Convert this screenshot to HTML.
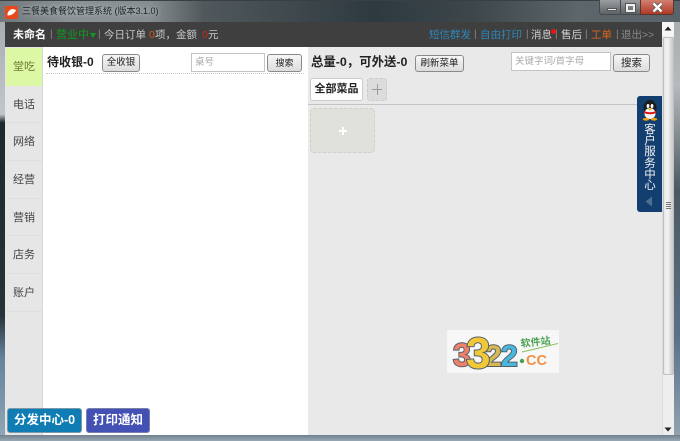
<!DOCTYPE html>
<html lang="zh">
<head>
<meta charset="utf-8">
<style>
html,body{margin:0;padding:0}
body{width:680px;height:441px;overflow:hidden;position:relative;background:#5d6870;font-family:"Liberation Sans","Noto Sans CJK SC",sans-serif;font-size:12px;color:#333}
.a{position:absolute}
.t{position:absolute;white-space:nowrap;line-height:16px}
.h{font-size:10.5px;top:27px}
.s{font-size:10px;top:27px;color:#888}
.nav{position:absolute;left:6px;width:36px;background:#e6e6e6;border-bottom:1px solid #dedede;text-align:center;font-size:11px;color:#444;box-sizing:border-box}
.btn{position:absolute;box-sizing:border-box;height:18px;border:1px solid #8a8a8a;border-radius:3px;background:linear-gradient(#f6f6f6,#dcdcdc);text-align:center;font-size:9.5px;line-height:16px;color:#222;white-space:nowrap}
.inp{position:absolute;box-sizing:border-box;background:#fff;border:1px solid #c4c4c4;color:#aaa;font-size:9.5px;white-space:nowrap}
</style>
</head>
<body>
<!-- frame -->
<div class="a" style="left:0;top:0;width:680px;height:22px;background:linear-gradient(90deg,#70787c 0,#8a9296 10%,#868e92 22%,#50585c 30%,#2e3a40 55%,#3d474c 70%,#5d666a 85%,#59636a 100%)"></div>
<div class="a" style="left:0;top:0;width:680px;height:1px;background:#3a3f42"></div>
<div class="a" style="left:0;top:22px;width:5px;height:419px;background:linear-gradient(#a9aeb0 0,#c2c6c8 22%,#1c2a30 24%,#26343a 70%,#64829a 80%,#94a8b8 100%)"></div>
<div class="a" style="left:674px;top:22px;width:6px;height:419px;background:linear-gradient(#a9aeb0 0,#b5babd 15%,#4a5a62 40%,#5b7186 75%,#92a5b4 100%)"></div>
<div class="a" style="left:0;top:435px;width:680px;height:6px;background:linear-gradient(#70808c,#98a8b4)"></div>

<!-- title bar -->
<svg class="a" style="left:5px;top:6px" width="13" height="13" viewBox="0 0 13 13"><rect width="13" height="13" rx="2" fill="#e8481c"/><path d="M2.5 9.5 C2 6 5 3 8 3 L11 4 C10 7 7 9.5 2.5 9.5Z" fill="#fff"/></svg>
<div class="t" style="left:22px;top:3px;font-size:9px;color:#1c2022;text-shadow:0 0 4px #d0d4d6">三餐美食餐饮管理系统 (版本3.1.0)</div>
<!-- window buttons -->
<div class="a" style="left:599px;top:0;width:22px;height:15px;box-sizing:border-box;background:linear-gradient(#9a9ea0,#5c6265);border:1px solid #45494b;border-top:0;border-radius:0 0 0 3px"></div>
<div class="a" style="left:607px;top:8px;width:10px;height:3px;background:#f0f0f0;border:1px solid #555;box-sizing:border-box"></div>
<div class="a" style="left:621px;top:0;width:19px;height:15px;box-sizing:border-box;background:linear-gradient(#9a9ea0,#5c6265);border-bottom:1px solid #45494b"></div>
<div class="a" style="left:626px;top:4px;width:9px;height:8px;box-sizing:border-box;border:2px solid #eee;outline:1px solid #555"></div>
<div class="a" style="left:640px;top:0;width:34px;height:15px;box-sizing:border-box;background:linear-gradient(#d08070,#b03a26);border:1px solid #5a3530;border-top:0;border-radius:0 0 3px 0"></div>
<svg class="a" style="left:651px;top:2px" width="13" height="11" viewBox="0 0 13 11"><path d="M2.5 1.5 L10.5 9.5 M10.5 1.5 L2.5 9.5" stroke="#555" stroke-width="4"/><path d="M2.5 1.5 L10.5 9.5 M10.5 1.5 L2.5 9.5" stroke="#fff" stroke-width="2.4"/></svg>

<!-- header -->
<div class="a" style="left:5px;top:22px;width:657px;height:25px;background:#3f3f3f"></div>
<div class="t" style="left:13px;top:27px;font-size:11px;font-weight:bold;color:#fff">未命名</div>
<div class="t s" style="left:50px">|</div>
<div class="t" style="left:56px;top:27px;font-size:11px;color:#0f9a1c">营业中</div>
<svg class="a" style="left:90px;top:33px" width="6" height="5" viewBox="0 0 6 5"><path d="M0 0 L6 0 L3 5Z" fill="#0f9a1c"/></svg>
<div class="t s" style="left:98px">|</div>
<div class="t h" style="left:104px;color:#c8c8c8">今日订单</div>
<div class="t h" style="left:149px;color:#d9541e">0</div>
<div class="t h" style="left:155px;color:#c8c8c8">项，金额</div>
<div class="t h" style="left:202px;color:#c82a1e">0</div>
<div class="t h" style="left:208px;color:#c8c8c8">元</div>

<div class="t h" style="left:429px;color:#2f86b8">短信群发</div>
<div class="t s" style="left:474px">|</div>
<div class="t h" style="left:480px;color:#2f86b8">自由打印</div>
<div class="t s" style="left:526px">|</div>
<div class="t h" style="left:531px;color:#d0d0d0">消息</div>
<div class="a" style="left:551px;top:29px;width:5px;height:5px;border-radius:50%;background:#f01010"></div>
<div class="t s" style="left:555px">|</div>
<div class="t h" style="left:561px;color:#d0d0d0">售后</div>
<div class="t s" style="left:585px">|</div>
<div class="t h" style="left:591px;color:#e0641a">工单</div>
<div class="t s" style="left:616px">|</div>
<div class="t h" style="left:621px;color:#8a8a8a">退出&gt;&gt;</div>

<!-- sidebar -->
<div class="a" style="left:5px;top:47px;width:38px;height:388px;background:#e6e6e6;border-right:1px solid #d8d8d8;box-sizing:border-box"></div>
<div class="nav" style="top:48px;height:38px;line-height:39px;background:#dcf8a4;color:#6c7a30;border:0">堂吃</div>
<div class="nav" style="top:86px;height:37px;line-height:38px">电话</div>
<div class="nav" style="top:123px;height:38px;line-height:39px">网络</div>
<div class="nav" style="top:161px;height:38px;line-height:39px">经营</div>
<div class="nav" style="top:199px;height:37px;line-height:38px">营销</div>
<div class="nav" style="top:236px;height:38px;line-height:39px">店务</div>
<div class="nav" style="top:274px;height:38px;line-height:39px">账户</div>

<!-- order column -->
<div class="a" style="left:43px;top:47px;width:265px;height:388px;background:#fff"></div>
<div class="t" style="left:47px;top:54px;font-size:12px;font-weight:bold;color:#222">待收银-0</div>
<div class="btn" style="left:102px;top:54px;width:38px">全收银</div>
<div class="inp" style="left:191px;top:53px;width:74px;height:19px;padding:2px 3px;line-height:13px">桌号</div>
<div class="btn" style="left:267px;top:54px;width:35px;font-size:9px">搜索</div>
<div class="a" style="left:46px;top:73px;width:258px;height:1px;border-top:1px dotted #c4c4c4"></div>

<!-- menu column -->
<div class="a" style="left:308px;top:47px;width:354px;height:388px;background:#e9e9e9"></div>
<div class="t" style="left:311px;top:54px;font-size:12.4px;font-weight:bold;color:#222">总量-0，可外送-0</div>
<div class="btn" style="left:415px;top:55px;width:49px;height:17px;line-height:15px">刷新菜单</div>
<div class="inp" style="left:511px;top:52px;width:100px;height:19px;padding:2px 3px;line-height:13px">关键字词/首字母</div>
<div class="btn" style="left:613px;top:54px;width:37px;height:18px;font-size:10.5px">搜索</div>
<div class="a" style="left:310px;top:78px;width:53px;height:23px;box-sizing:border-box;background:#fff;border:1px solid #ccc;border-radius:3px;text-align:center;font-size:11px;font-weight:bold;line-height:21px;color:#222;white-space:nowrap">全部菜品</div>
<div class="a" style="left:367px;top:78px;width:20px;height:23px;box-sizing:border-box;background:#dcdcdc;border:1px dashed #ccc;border-radius:3px"></div>
<div class="a" style="left:372px;top:89px;width:10px;height:1px;background:#9a9a9a"></div>
<div class="a" style="left:377px;top:84px;width:1px;height:11px;background:#9a9a9a"></div>
<div class="a" style="left:308px;top:104px;width:354px;height:1px;background:#c4c4c4"></div>
<div class="a" style="left:310px;top:108px;width:65px;height:45px;box-sizing:border-box;background:#dfe1da;border:1px dashed #cfd1ca;border-radius:4px"></div>
<div class="a" style="left:339px;top:130px;width:8px;height:2px;background:#fff"></div>
<div class="a" style="left:342px;top:127px;width:2px;height:8px;background:#fff"></div>

<!-- bottom buttons -->
<div class="a" style="left:7px;top:408px;width:75px;height:25px;box-sizing:border-box;background:#0f7cb4;border:1px solid #7a9aa8;border-radius:3px;color:#fff;font-size:12.5px;font-weight:bold;text-align:center;line-height:23px;white-space:nowrap">分发中心-0</div>
<div class="a" style="left:86px;top:408px;width:64px;height:25px;box-sizing:border-box;background:#4350b4;border:1px solid #7a80a8;border-radius:3px;color:#fff;font-size:12.5px;font-weight:bold;text-align:center;line-height:23px;white-space:nowrap">打印通知</div>

<!-- service tab -->
<div class="a" style="left:637px;top:96px;width:25px;height:116px;background:#123f70;border-radius:3px 0 0 3px"></div>
<svg class="a" style="left:640px;top:100px" width="20" height="21" viewBox="0 0 19 21">
<ellipse cx="9.5" cy="8" rx="6.5" ry="8" fill="#1c1c1c"/>
<ellipse cx="9.5" cy="13.5" rx="5.5" ry="5.5" fill="#f4f4f4"/>
<ellipse cx="7.5" cy="6" rx="1.4" ry="2" fill="#fff"/><ellipse cx="11.5" cy="6" rx="1.4" ry="2" fill="#fff"/>
<path d="M7 8.5 L12 8.5 L9.5 10.5Z" fill="#f0b010"/>
<path d="M3.5 11 Q9.5 13.5 15.5 11 L15.5 13 Q9.5 15.5 3.5 13Z" fill="#d81818"/>
<ellipse cx="5.5" cy="19.3" rx="3.2" ry="1.4" fill="#f0a010"/><ellipse cx="13.5" cy="19.3" rx="3.2" ry="1.4" fill="#f0a010"/>
</svg>
<div class="a" style="left:641px;top:125px;width:18px;font-size:11.5px;line-height:11.2px;color:#f2f2f2;text-align:center">客<br>户<br>服<br>务<br>中<br>心</div>
<svg class="a" style="left:645px;top:196px" width="8" height="11" viewBox="0 0 8 11"><path d="M7 0.5 L7 10.5 L0.5 5.5Z" fill="#4a6f90"/></svg>

<!-- scrollbar -->
<div class="a" style="left:662px;top:22px;width:12px;height:413px;background:#eeeeee;border-left:1px solid #dcdcdc;box-sizing:border-box"></div>
<div class="a" style="left:662px;top:22px;width:12px;height:14px;background:#f6f6f6"></div>
<svg class="a" style="left:664px;top:26px" width="8" height="5" viewBox="0 0 8 5"><path d="M4 0.5 L7.5 4.5 L0.5 4.5Z" fill="#222"/></svg>
<div class="a" style="left:663px;top:37px;width:11px;height:338px;box-sizing:border-box;background:linear-gradient(90deg,#e6e6e6,#f4f4f4 40%,#c8c8c8);border:1px solid #c0c0c0;border-radius:2px"></div>
<div class="a" style="left:666px;top:202px;width:5px;height:1px;background:#777;box-shadow:0 2px 0 #777,0 4px 0 #777,0 6px 0 #777"></div>
<svg class="a" style="left:664px;top:427px" width="8" height="5" viewBox="0 0 8 5"><path d="M0.5 0.5 L7.5 0.5 L4 4.5Z" fill="#222"/></svg>

<!-- watermark -->
<div class="a" style="left:447px;top:330px;width:112px;height:43px;background:#f7f7f7"></div>
<svg class="a" style="left:447px;top:330px" width="112" height="43" viewBox="0 0 112 43">
<g font-family="'Liberation Sans',sans-serif" font-weight="bold" stroke="#55606a" stroke-width="2" paint-order="stroke">
<text x="6" y="36" font-size="32" fill="#f0806a">3</text>
<text x="38" y="36" font-size="30" fill="#d8b850">2</text>
<text x="54" y="36" font-size="30" fill="#48b8e0">2</text>
<text x="19" y="38" font-size="44" fill="#f2c838">3</text>
</g>
<circle cx="75" cy="31" r="2.2" fill="#4aa050"/>
<text x="79" y="35" font-family="'Liberation Sans',sans-serif" font-weight="bold" font-size="14.5" fill="#f09048">CC</text>
<text x="74" y="17" font-family="'Liberation Sans','Noto Sans CJK SC',sans-serif" font-weight="bold" font-size="10" fill="#4aa050" transform="rotate(-6 74 17)">软件站</text>
<path d="M75 22 L111 13.5" stroke="#8ac060" stroke-width="1"/>
</svg>
</body>
</html>
